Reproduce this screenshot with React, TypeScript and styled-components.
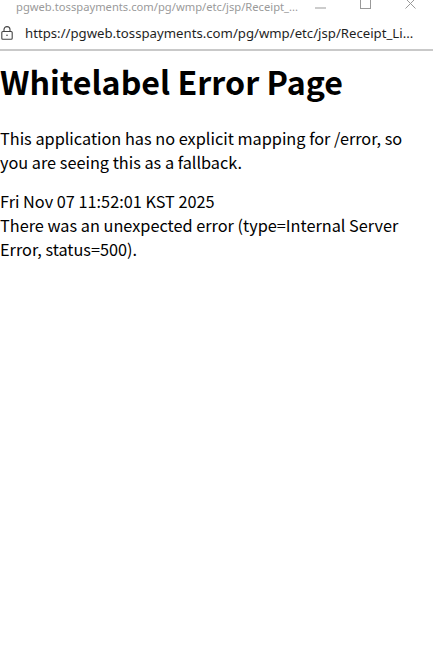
import * as React from "react";
import styled, { createGlobalStyle } from "styled-components";

const Global = createGlobalStyle`
  html, body {
    margin: 0;
    padding: 0;
    background: #fff;
  }
  body {
    font-family: "Noto Sans CJK KR", "Noto Sans", sans-serif;
  }
`;

const Window = styled.div`
  width: 433px;
  height: 646px;
  overflow: hidden;
  display: flex;
  flex-direction: column;
  background: #fff;
`;

const TitleBar = styled.div`
  height: 17px;
  display: flex;
  align-items: flex-end;
  background: #fff;
  color: #9a9a9a;
  font-family: "Noto Sans", sans-serif;
  font-size: 11.2px;
  overflow: hidden;
`;

const TitleText = styled.span`
  flex: 1;
  min-width: 0;
  padding-left: 16px;
  line-height: 15px;
  margin-bottom: 3px;
  white-space: nowrap;
  overflow: hidden;
`;

const Controls = styled.div`
  display: flex;
  align-items: flex-end;
`;

const ControlBtn = styled.span`
  width: 45px;
  height: 17px;
  display: flex;
  align-items: flex-end;
  justify-content: center;
  padding-bottom: 8px;
  box-sizing: border-box;
`;

const AddressBar = styled.div`
  height: 32px;
  display: flex;
  align-items: center;
  gap: 12px;
  padding-left: 1px;
  border-bottom: 2px solid #c9c9c9;
  font-family: "Noto Sans", sans-serif;
  font-size: 13.2px;
  color: #1f1f1f;
`;

const Url = styled.span`
  white-space: nowrap;
`;

const Page = styled.main`
  padding: 0;
  color: #000;
`;

const Heading = styled.h1`
  margin: 10px 0 0;
  font-size: 32.2px;
  font-weight: 700;
  line-height: 40px;
`;

const Text = styled.p<{ $top?: number }>`
  margin: ${(p) => p.$top ?? 0}px 0 0;
  font-size: 16.3px;
  line-height: 24px;
`;

const LockIcon = () => (
  <svg width="12" height="14" viewBox="0 0 12 14" fill="none" stroke="#444" strokeWidth="1.1">
    <rect x="0.8" y="5.5" width="10.4" height="7.7" rx="1" />
    <path d="M3 5.5V3.6a3 3 0 0 1 6 0V5.5" />
    <circle cx="6" cy="9.3" r="0.8" fill="#444" stroke="none" />
  </svg>
);

export default function App() {
  return (
    <Window>
      <Global />
      <TitleBar>
        <TitleText>pgweb.tosspayments.com/pg/wmp/etc/jsp/Receipt_...</TitleText>
        <Controls>
          <ControlBtn>
            <svg width="11" height="2"><path d="M0 1h11" stroke="#999" /></svg>
          </ControlBtn>
          <ControlBtn>
            <svg width="11" height="11"><rect x="0.5" y="0.5" width="10" height="10" fill="none" stroke="#999" /></svg>
          </ControlBtn>
          <ControlBtn>
            <svg width="11" height="11"><path d="M0.5 0.5l10 10M10.5 0.5l-10 10" stroke="#999" /></svg>
          </ControlBtn>
        </Controls>
      </TitleBar>
      <AddressBar>
        <LockIcon />
        <Url>https://pgweb.tosspayments.com/pg/wmp/etc/jsp/Receipt_Li...</Url>
      </AddressBar>
      <Page>
        <Heading>Whitelabel Error Page</Heading>
        <Text $top={25}>
          This application has no explicit mapping for /error, so you are seeing this as a fallback.
        </Text>
        <Text $top={15}>Fri Nov 07 11:52:01 KST 2025</Text>
        <Text>There was an unexpected error (type=Internal Server Error, status=500).</Text>
      </Page>
    </Window>
  );
}
